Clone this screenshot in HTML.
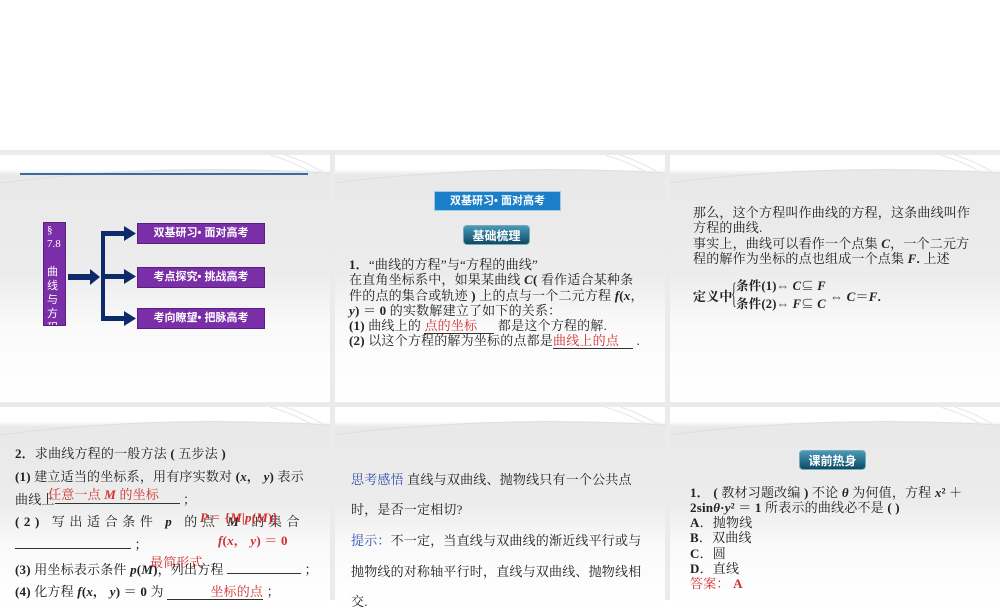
<!DOCTYPE html>
<html><head><meta charset="utf-8"><style>
*{margin:0;padding:0;box-sizing:border-box}
body{width:1000px;height:600px;background:#fff;position:relative;overflow:hidden;font-family:"Liberation Serif","Noto Serif CJK SC",serif;color:#222}
.band{position:absolute;left:0;top:150px;width:1000px;height:450px;background:#ebebeb}
.s{position:absolute;overflow:hidden;background:linear-gradient(#fff 0px,#fff 14px,#e9e9e9 20px,#ececec 48%,#fafafa 70%,#fff 100%)}
.sw{position:absolute;left:0;top:0;width:100%;height:40px}
.a{position:absolute;white-space:nowrap;font-size:13px;line-height:15px;letter-spacing:0.2px}
.b{font-weight:bold}
.r{color:#d03030}
.bl{color:#3050b0}
.p{position:absolute;background:#7a2ea8;color:#fff;font-family:"Liberation Sans","Noto Sans CJK SC",sans-serif;font-size:11px;font-weight:bold;text-align:center;line-height:19px;border:1px solid #5a1f80}
.n{position:absolute;background:#0f2a6a}
.btn{position:absolute;background:linear-gradient(#4a9ab8,#0c4a66);color:#fff;border-radius:4px;font-family:"Liberation Sans","Noto Sans CJK SC",sans-serif;font-size:12px;font-weight:bold;text-align:center;line-height:20px;border:1px solid #7ab}
u{text-decoration:none;border-bottom:1px solid #333;display:inline-block}
</style></head><body>
<div class="band"></div>

<!-- slide 1 -->
<div class="s" style="left:0;top:155px;width:330px;height:247px">
<svg class="sw" viewBox="0 0 330 40"><path d="M0 28 Q150 8 330 18 L330 40 L0 40Z" fill="#e9e9e9"/><path d="M0 28 Q150 8 330 18" stroke="#dedede" fill="none"/><path d="M270 0 Q305 10 330 30 M285 0 Q310 8 330 22" stroke="#e6e6e6" fill="none"/></svg>
<div style="position:absolute;left:20px;top:18px;width:288px;height:2px;background:#3a6aa0"></div>
<div class="p" style="left:43px;top:67px;width:23px;height:104px;text-align:left;padding-left:3px;font-family:'Liberation Serif','Noto Sans CJK SC',serif;font-weight:normal;font-size:11px;line-height:14px;overflow:hidden">§<br>7.8<br><br>曲<br>线<br>与<br>方<br>程</div>
<div class="n" style="left:68px;top:119px;width:24px;height:6px"></div>
<svg style="position:absolute;left:90px;top:114px" width="12" height="16"><path d="M0 0 L10 8 L0 16Z" fill="#0f2a6a"/></svg>
<div class="n" style="left:101px;top:77px;width:4px;height:88px"></div>
<div class="n" style="left:101px;top:76px;width:25px;height:5px"></div>
<div class="n" style="left:101px;top:119px;width:25px;height:5px"></div>
<div class="n" style="left:101px;top:161px;width:25px;height:5px"></div>
<svg style="position:absolute;left:124px;top:71px" width="14" height="100"><path d="M0 0 L12 7.5 L0 15Z M0 43 L12 50.5 L0 58Z M0 85 L12 92.5 L0 100Z" fill="#0f2a6a"/></svg>
<div class="p" style="left:137px;top:68px;width:128px;height:21px">双基研习• 面对高考</div>
<div class="p" style="left:137px;top:112px;width:128px;height:21px">考点探究• 挑战高考</div>
<div class="p" style="left:137px;top:153px;width:128px;height:21px">考向瞭望• 把脉高考</div>
</div>

<!-- slide 2 -->
<div class="s" style="left:335px;top:155px;width:330px;height:247px">
<svg class="sw" viewBox="0 0 330 40"><path d="M0 28 Q150 8 330 18 L330 40 L0 40Z" fill="#e9e9e9"/><path d="M0 28 Q150 8 330 18" stroke="#dedede" fill="none"/><path d="M270 0 Q305 10 330 30 M285 0 Q310 8 330 22" stroke="#e6e6e6" fill="none"/></svg>
<div style="position:absolute;left:99px;top:36px;width:127px;height:20px;background:#1a7fc8;color:#fff;font-family:'Liberation Sans','Noto Sans CJK SC',sans-serif;font-size:11px;font-weight:bold;text-align:center;line-height:18px;border:1px solid #9cd">双基研习• 面对高考</div>
<div class="btn" style="left:128px;top:70px;width:67px;height:20px">基础梳理</div>
<div class="a" style="left:14px;top:102px"><span class="b">1．</span>“曲线的方程”与“方程的曲线”</div>
<div class="a" style="left:14px;top:117px">在直角坐标系中，如果某曲线 <i class="b">C</i><b>(</b> 看作适合某种条</div>
<div class="a" style="left:14px;top:133px">件的点的集合或轨迹 <b>)</b> 上的点与一个二元方程 <b><i>f</i>(<i>x</i></b>，</div>
<div class="a" style="left:14px;top:148px"><b><i>y</i>)</b> ＝ <b>0</b> 的实数解建立了如下的关系：</div>
<div class="a" style="left:14px;top:163px"><b>(1)</b> 曲线上的 <u style="width:70px"><span class="r">点的坐标</span></u> 都是这个方程的解.</div>
<div class="a" style="left:14px;top:178px"><b>(2)</b> 以这个方程的解为坐标的点都是<u style="width:80px"><span class="r">曲线上的点</span></u> .</div>
</div>

<!-- slide 3 -->
<div class="s" style="left:670px;top:155px;width:330px;height:247px">
<svg class="sw" viewBox="0 0 330 40"><path d="M0 28 Q150 8 330 18 L330 40 L0 40Z" fill="#e9e9e9"/><path d="M0 28 Q150 8 330 18" stroke="#dedede" fill="none"/><path d="M270 0 Q305 10 330 30 M285 0 Q310 8 330 22" stroke="#e6e6e6" fill="none"/></svg>
<div class="a" style="left:23px;top:50px">那么，这个方程叫作曲线的方程，这条曲线叫作</div>
<div class="a" style="left:23px;top:65px">方程的曲线.</div>
<div class="a" style="left:23px;top:81px">事实上，曲线可以看作一个点集 <b><i>C</i></b>，一个二元方</div>
<div class="a" style="left:23px;top:96px">程的解作为坐标的点也组成一个点集 <b><i>F</i>.</b> 上述</div>
<div class="a b" style="left:23px;top:134px">定义中</div>
<div style="position:absolute;left:61px;top:124px;font-size:30px;line-height:30px;color:#333;transform:scaleX(.4);transform-origin:left">{</div>
<div class="a b" style="left:66px;top:124px;font-size:12.5px">条件(1)⇔ <i>C</i>⊆ <i>F</i></div>
<div class="a b" style="left:66px;top:142px;font-size:12.5px">条件(2)⇔ <i>F</i>⊆ <i>C</i></div>
<div class="a b" style="left:160px;top:134px">⇔ <i>C</i>＝<i>F</i>.</div>
</div>

<!-- slide 4 -->
<div class="s" style="left:0;top:407px;width:330px;height:200px">
<svg class="sw" viewBox="0 0 330 40"><path d="M0 28 Q150 8 330 18 L330 40 L0 40Z" fill="#e9e9e9"/><path d="M0 28 Q150 8 330 18" stroke="#dedede" fill="none"/><path d="M270 0 Q305 10 330 30 M285 0 Q310 8 330 22" stroke="#e6e6e6" fill="none"/></svg>
<div class="a" style="left:15px;top:39px"><b>2．</b>求曲线方程的一般方法 <b>(</b> 五步法 <b>)</b></div>
<div class="a" style="left:15px;top:62px"><b>(1)</b> 建立适当的坐标系，用有序实数对 <b>(<i>x</i>，  <i>y</i>)</b> 表示</div>
<div class="a" style="left:15px;top:85px">曲线上<u style="width:125px"></u> ；</div>
<div class="a r" style="left:48px;top:80px">任意一点 <b><i>M</i></b> 的坐标</div>
<div class="a" style="left:15px;top:107px;letter-spacing:4.6px"><b>(2)</b> 写出适合条件 <b><i>p</i></b> 的点 <b><i>M</i></b> 的集合</div>
<div class="a r b" style="left:200px;top:103px"><i>P</i>＝ {<i>M</i>|<i>p</i>(<i>M</i>)}</div>
<div class="a" style="left:15px;top:130px"><u style="width:116px"></u> ；</div>
<div class="a r b" style="left:218px;top:126px"><i>f</i>(<i>x</i>，  <i>y</i>) ＝ 0</div>
<div class="a r" style="left:150px;top:148px">最简形式</div>
<div class="a" style="left:15px;top:155px"><b>(3)</b> 用坐标表示条件 <b><i>p</i>(<i>M</i>)</b>，列出方程 <u style="width:74px"></u> ；</div>
<div class="a" style="left:15px;top:177px"><b>(4)</b> 化方程 <b><i>f</i>(<i>x</i>，  <i>y</i>)</b> ＝ <b>0</b> 为 <u style="width:96px;text-align:right"><span class="r">坐标的点</span></u> ；</div>
</div>

<!-- slide 5 -->
<div class="s" style="left:335px;top:407px;width:330px;height:200px">
<svg class="sw" viewBox="0 0 330 40"><path d="M0 28 Q150 8 330 18 L330 40 L0 40Z" fill="#e9e9e9"/><path d="M0 28 Q150 8 330 18" stroke="#dedede" fill="none"/><path d="M270 0 Q305 10 330 30 M285 0 Q310 8 330 22" stroke="#e6e6e6" fill="none"/></svg>
<div class="a" style="left:16px;top:65px"><span class="bl">思考感悟</span>  直线与双曲线、抛物线只有一个公共点</div>
<div class="a" style="left:16px;top:95px">时，是否一定相切?</div>
<div class="a" style="left:16px;top:126px"><span class="bl">提示：</span>不一定，当直线与双曲线的渐近线平行或与</div>
<div class="a" style="left:16px;top:157px">抛物线的对称轴平行时，直线与双曲线、抛物线相</div>
<div class="a" style="left:16px;top:187px">交.</div>
</div>

<!-- slide 6 -->
<div class="s" style="left:670px;top:407px;width:330px;height:200px">
<svg class="sw" viewBox="0 0 330 40"><path d="M0 28 Q150 8 330 18 L330 40 L0 40Z" fill="#e9e9e9"/><path d="M0 28 Q150 8 330 18" stroke="#dedede" fill="none"/><path d="M270 0 Q305 10 330 30 M285 0 Q310 8 330 22" stroke="#e6e6e6" fill="none"/></svg>
<div class="btn" style="left:129px;top:43px;width:67px;height:20px">课前热身</div>
<div class="a" style="left:20px;top:78px"><b>1．</b> <b>(</b> 教材习题改编 <b>)</b> 不论 <b><i>θ</i></b> 为何值，方程 <b><i>x</i>²</b> ＋</div>
<div class="a" style="left:20px;top:93px"><b>2sin<i>θ</i>·<i>y</i>²</b> ＝ <b>1</b> 所表示的曲线必不是 <b>(          )</b></div>
<div class="a" style="left:20px;top:108px"><b>A</b>．抛物线</div>
<div class="a" style="left:20px;top:123px"><b>B</b>．双曲线</div>
<div class="a" style="left:20px;top:139px"><b>C</b>．圆</div>
<div class="a" style="left:20px;top:154px"><b>D</b>．直线</div>
<div class="a r" style="left:20px;top:169px">答案： <b>A</b></div>
</div>
</body></html>
